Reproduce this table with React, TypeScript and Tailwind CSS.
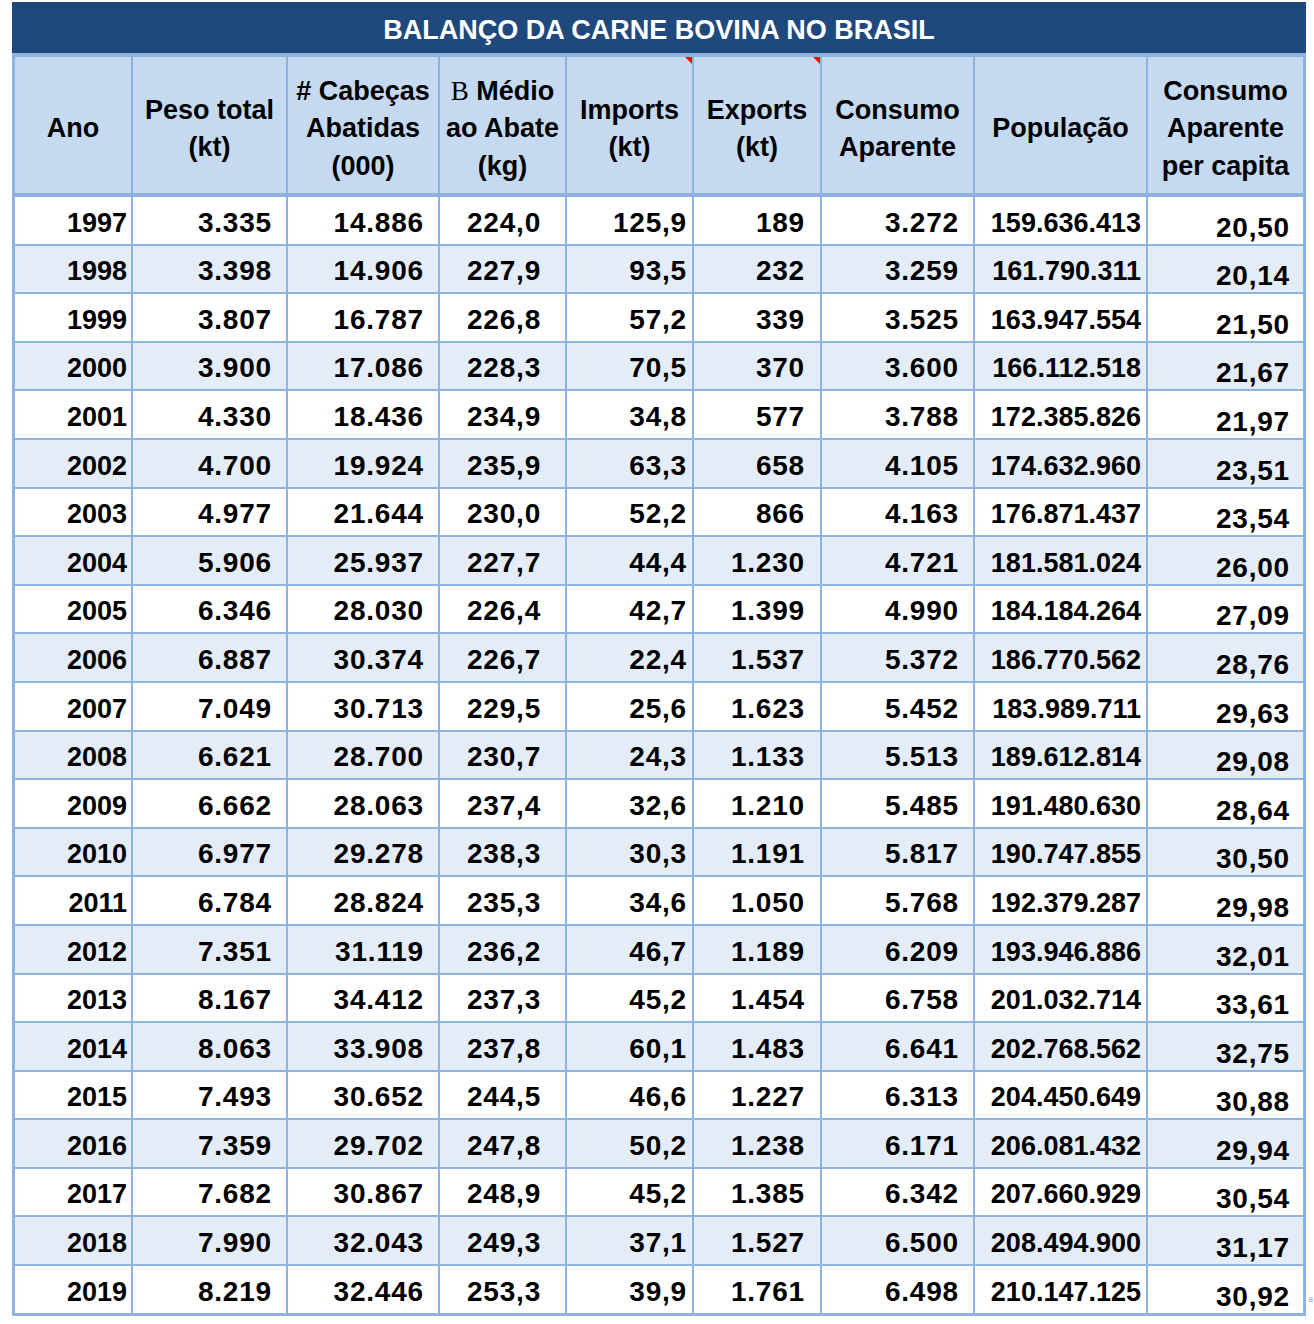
import React from "react";

type Row = [string, string, string, string, string, string, string, string, string];

const rows: Row[] = [
  ["1997", "3.335", "14.886", "224,0", "125,9", "189", "3.272", "159.636.413", "20,50"],
  ["1998", "3.398", "14.906", "227,9", "93,5", "232", "3.259", "161.790.311", "20,14"],
  ["1999", "3.807", "16.787", "226,8", "57,2", "339", "3.525", "163.947.554", "21,50"],
  ["2000", "3.900", "17.086", "228,3", "70,5", "370", "3.600", "166.112.518", "21,67"],
  ["2001", "4.330", "18.436", "234,9", "34,8", "577", "3.788", "172.385.826", "21,97"],
  ["2002", "4.700", "19.924", "235,9", "63,3", "658", "4.105", "174.632.960", "23,51"],
  ["2003", "4.977", "21.644", "230,0", "52,2", "866", "4.163", "176.871.437", "23,54"],
  ["2004", "5.906", "25.937", "227,7", "44,4", "1.230", "4.721", "181.581.024", "26,00"],
  ["2005", "6.346", "28.030", "226,4", "42,7", "1.399", "4.990", "184.184.264", "27,09"],
  ["2006", "6.887", "30.374", "226,7", "22,4", "1.537", "5.372", "186.770.562", "28,76"],
  ["2007", "7.049", "30.713", "229,5", "25,6", "1.623", "5.452", "183.989.711", "29,63"],
  ["2008", "6.621", "28.700", "230,7", "24,3", "1.133", "5.513", "189.612.814", "29,08"],
  ["2009", "6.662", "28.063", "237,4", "32,6", "1.210", "5.485", "191.480.630", "28,64"],
  ["2010", "6.977", "29.278", "238,3", "30,3", "1.191", "5.817", "190.747.855", "30,50"],
  ["2011", "6.784", "28.824", "235,3", "34,6", "1.050", "5.768", "192.379.287", "29,98"],
  ["2012", "7.351", "31.119", "236,2", "46,7", "1.189", "6.209", "193.946.886", "32,01"],
  ["2013", "8.167", "34.412", "237,3", "45,2", "1.454", "6.758", "201.032.714", "33,61"],
  ["2014", "8.063", "33.908", "237,8", "60,1", "1.483", "6.641", "202.768.562", "32,75"],
  ["2015", "7.493", "30.652", "244,5", "46,6", "1.227", "6.313", "204.450.649", "30,88"],
  ["2016", "7.359", "29.702", "247,8", "50,2", "1.238", "6.171", "206.081.432", "29,94"],
  ["2017", "7.682", "30.867", "248,9", "45,2", "1.385", "6.342", "207.660.929", "30,54"],
  ["2018", "7.990", "32.043", "249,3", "37,1", "1.527", "6.500", "208.494.900", "31,17"],
  ["2019", "8.219", "32.446", "253,3", "39,9", "1.761", "6.498", "210.147.125", "30,92"],
];

// alinhamento e tamanho de cada coluna, como na planilha original
const cellStyle = [
  "text-[27px] justify-end pr-[4px] items-end pb-[5px]",
  "text-[28px] tracking-[0.8px] justify-end pr-[14px] items-end pb-[6px]",
  "text-[28px] tracking-[0.8px] justify-end pr-[14px] items-end pb-[6px]",
  "text-[28px] tracking-[0.8px] justify-center pl-[3px] items-end pb-[6px]",
  "text-[28px] tracking-[0.8px] justify-end pr-[5px] items-end pb-[6px]",
  "text-[28px] tracking-[0.8px] justify-end pr-[15px] items-end pb-[6px]",
  "text-[28px] tracking-[0.8px] justify-end pr-[14px] items-end pb-[6px]",
  "text-[27px] justify-end pr-[5px] items-end pb-[5px]",
  "text-[28px] tracking-[0.8px] justify-end pr-[13px] items-end pb-[1px]",
];

function CommentMark() {
  return (
    <span className="absolute top-0 right-0 w-0 h-0 border-t-[7px] border-l-[7px] border-t-[#ff0000] border-l-transparent" />
  );
}

function HeaderCell({ children, mark }: { children: React.ReactNode; mark?: boolean }) {
  return (
    <div className="relative bg-[#c5d9f1] h-[138px] border-b-2 border-[#8fb3e0] flex items-center justify-center text-center leading-[37.5px] pt-[8px]">
      {children}
      {mark && <CommentMark />}
    </div>
  );
}

export default function App() {
  return (
    <div className="bg-white w-[1314px] h-[1324px] pt-[2px] pl-[12px] font-['Liberation_Sans',Arial,sans-serif] font-bold text-black">
      <div className="relative w-[1294px]">
        {/* Título */}
        <div className="h-[51px] bg-[#1f497d] flex items-center justify-center pt-[5px]">
          <span className="text-white text-[27px] leading-[31px]">BALANÇO DA CARNE BOVINA NO BRASIL</span>
        </div>

        {/* Tabela */}
        <div className="bg-[#8fb3e0] p-[3px] pt-[4px] grid grid-cols-[116px_153px_150px_125px_125px_126px_151px_171px_155px] gap-[2px] text-[27px]">
          <HeaderCell>Ano</HeaderCell>
          <HeaderCell>
            Peso total
            <br />
            (kt)
          </HeaderCell>
          <HeaderCell>
            # Cabeças
            <br />
            Abatidas
            <br />
            (000)
          </HeaderCell>
          <HeaderCell>
            <span>
              <span className="font-['Liberation_Serif',serif] font-normal">B</span> Médio
              <br />
              ao Abate
              <br />
              (kg)
            </span>
          </HeaderCell>
          <HeaderCell mark>
            Imports
            <br />
            (kt)
          </HeaderCell>
          <HeaderCell mark>
            Exports
            <br />
            (kt)
          </HeaderCell>
          <HeaderCell>
            Consumo
            <br />
            Aparente
          </HeaderCell>
          <HeaderCell>População</HeaderCell>
          <HeaderCell>
            Consumo
            <br />
            Aparente
            <br />
            per capita
          </HeaderCell>

          {rows.map((row, i) =>
            row.map((val, j) => (
              <div
                key={`${i}-${j}`}
                className={`h-[46.6px] flex leading-[31px] ${i % 2 === 0 ? "bg-white" : "bg-[#e4ecf7]"} ${cellStyle[j]}`}
              >
                {val}
              </div>
            ))
          )}
        </div>

        <span className="absolute right-[-7px] bottom-[10px] text-[8px] font-normal text-[#7f9fc8]">8</span>
      </div>
    </div>
  );
}
